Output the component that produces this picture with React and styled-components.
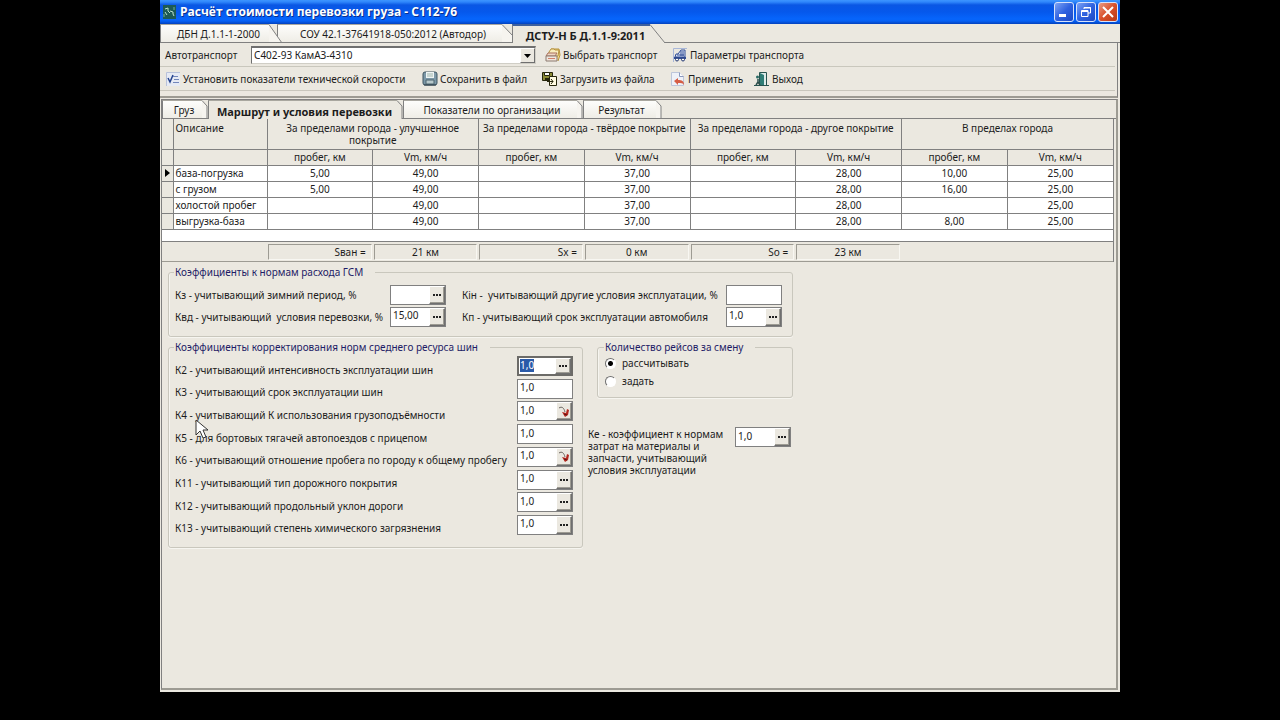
import React, { useState } from 'react'
import styled, { createGlobalStyle, css, ThemeProvider } from 'styled-components'

const theme = {
  face: '#ebe8e0',
  line: '#808080',
  soft: '#c9c7bd',
  shadow: '#9d9b93',
  ink: '#1c1c1c',
  caption: '#1e1c66',
  ui: "'Noto Sans', 'Open Sans', sans-serif",
  title: "'Open Sans', 'Noto Sans', sans-serif",
}

const GlobalStyle = createGlobalStyle`
  * {
    box-sizing: border-box;
  }
  body {
    margin: 0;
    background: #000;
  }
  button,
  input,
  select {
    font: inherit;
    color: inherit;
    margin: 0;
    border-radius: 0;
  }
`

const Desktop = styled.div`
  min-height: 100vh;
  padding: 0 12.5% 28px;
  display: flex;
  background: #000;
`

const Window = styled.main`
  flex: 1;
  min-width: 0;
  display: flex;
  flex-direction: column;
  background: ${({ theme }) => theme.face};
  color: ${({ theme }) => theme.ink};
  font-family: ${({ theme }) => theme.ui};
  font-size: 10px;
  line-height: 13px;
`

const TitleBar = styled.header`
  height: 24px;
  padding: 0 2px 0 3px;
  display: flex;
  align-items: center;
  gap: 4px;
  color: #fff;
  background: linear-gradient(#3d95ff 0, #2f86fb 2px, #0a57e4 5px, #0558ec 12px, #0665fc 19px, #0560f4 21px, #0341bd 24px);
`

const Title = styled.h1`
  flex: 1;
  margin: 0;
  font-family: ${({ theme }) => theme.title};
  font-size: 12px;
  font-weight: 700;
  line-height: 20px;
  text-shadow: 1px 1px #0a2f8c;
`

const CaptionButton = styled.button`
  width: 20px;
  height: 20px;
  margin-left: -2px;
  padding: 0;
  display: grid;
  place-items: center;
  border: 1px solid #d6e2fb;
  border-radius: 3px;
  background: ${({ $close }) =>
    $close
      ? 'linear-gradient(135deg, #e99b83, #d9502b 50%, #b93a16)'
      : 'linear-gradient(135deg, #7da2f4, #2f62e0 50%, #1c48c4)'};
`

const TabStrip = styled.nav`
  display: flex;
  height: ${({ $h }) => $h}px;
  border-bottom: 1px solid ${({ theme }) => theme.line};
`

const TabButton = styled.button`
  position: relative;
  z-index: ${({ $level }) => $level};
  width: ${({ $w }) => $w}px;
  margin-right: ${({ $overlap = 0 }) => -$overlap}px;
  margin-bottom: -1px;
  padding: 0;
  display: flex;
  border: 0;
  background: none;
  white-space: nowrap;
  font-size: ${({ $active }) => ($active ? 11 : 10)}px;
  font-weight: ${({ $active }) => ($active ? 700 : 400)};
`

const TabLabel = styled.span`
  flex: 1;
  align-self: stretch;
  display: flex;
  align-items: center;
  justify-content: center;
  padding-left: ${({ $cut }) => Math.floor($cut / 2)}px;
  padding-top: 2px;
  border-left: 1px solid ${({ theme }) => theme.line};
  border-top: ${({ $mark }) => ($mark ? '2px solid #3c5f9e' : '1px solid #a9a79f')};
  ${({ $active, theme }) =>
    $active
      ? css`
          background: ${theme.face};
        `
      : css`
          background: linear-gradient(#fdfdfb, #efede6);
          border-bottom: 1px solid ${theme.line};
        `}
`

const TabEdge = styled.svg`
  flex: none;
  display: block;
`

const Panel = styled.section`
  margin-right: 2px;
  padding: 0 2px 5px 0;
  border-right: 1px solid ${({ theme }) => theme.line};
  border-bottom: 2px solid ${({ theme }) => theme.shadow};
`

const Toolbar = styled.div`
  height: 24px;
  padding: 1px 5px 0;
  display: flex;
  align-items: center;
  border-bottom: 1px solid ${({ theme }) => theme.soft};
`

const ToolLabel = styled.label`
  width: 86px;
`

const SelectBox = styled.span`
  width: 285px;
  height: 18px;
  margin-right: 9px;
  display: flex;
  align-items: stretch;
  border: 1px solid ${({ theme }) => theme.line};
  border-top-width: 2px;
  border-color: #6f6f6f #d0cec6 #d0cec6 #6f6f6f;
  background: #fff;
`

const Select = styled.select`
  flex: 1;
  padding: 0 2px;
  border: 0;
  background: none;
  appearance: none;
`

const Drop = styled.span`
  width: 15px;
  display: grid;
  place-items: center;
  background: ${({ theme }) => theme.face};
  border: 1px solid;
  border-color: #fff #6f6f6f #6f6f6f #fff;
  pointer-events: none;
`

const ToolButton = styled.button`
  min-width: ${({ $w }) => $w}px;
  padding: 0;
  display: flex;
  align-items: center;
  gap: 2px;
  border: 0;
  background: none;
  white-space: nowrap;
`

const Page = styled.section`
  flex: 1;
  margin: 1px 2px 2px 1px;
  border: 1px solid ${({ theme }) => theme.line};
  border-width: 1px 2px 2px 1px;
  border-color: ${({ theme }) => `${theme.line} ${theme.shadow} ${theme.shadow} ${theme.line}`};
`

const GridArea = styled.div`
  margin-right: 2px;
  background: #fff;
  border-right: 1px solid ${({ theme }) => theme.line};
`

const Grid = styled.table`
  width: 100%;
  table-layout: fixed;
  border-collapse: collapse;
  text-align: center;
  th,
  td {
    padding: 0 2px;
    border: 1px solid ${({ theme }) => theme.line};
    border-top: 0;
    height: 16px;
    line-height: 12px;
    font-weight: 400;
  }
  th {
    background: ${({ theme }) => theme.face};
  }
  tr > :first-child {
    border-left: 0;
  }
  tr > :last-child {
    border-right: 0;
  }
`

const GroupHead = styled.tr`
  && th {
    height: 30px;
    padding-top: 3px;
    vertical-align: top;
  }
`

const RowName = styled.th`
  text-align: left;
  white-space: nowrap;
  && {
    background: ${({ $head, theme }) => ($head ? theme.face : '#fff')};
  }
`

const Totals = styled.div`
  margin-top: 11px;
  height: 21px;
  padding: 2px 0 1px 106px;
  display: grid;
  grid-template-columns: repeat(8, 1fr);
  border-top: 1px solid ${({ theme }) => theme.line};
  border-bottom: 1px solid ${({ theme }) => theme.shadow};
  background: ${({ theme }) => theme.face};
`

const Total = styled.output`
  margin-right: 2px;
  padding: 0 5px;
  line-height: 14px;
  text-align: ${({ $name }) => ($name ? 'right' : 'center')};
  border: 1px solid;
  border-color: ${({ theme }) => `${theme.shadow} #f8f7f2 #f8f7f2 ${theme.shadow}`};
`

const Form = styled.form`
  position: relative;
  padding: 4px 6px;
  display: grid;
  grid-template-columns: 415px 205px;
  column-gap: 5px;
  row-gap: 4px;
  justify-content: start;
  align-items: start;
`

const Group = styled.fieldset`
  min-width: 0;
  margin: 0;
  padding: ${({ $pad }) => $pad};
  border: 1px solid ${({ theme }) => theme.soft};
  border-radius: 3px;
  box-shadow: inset 1px 0 #f6f5f0, 0 1px #f6f5f0;
`

const Legend = styled.legend`
  margin-left: -1px;
  padding: 0 12px 0 1px;
  color: ${({ theme }) => theme.caption};
  white-space: nowrap;
`

const FuelGroup = styled(Group)`
  grid-column: 1 / -1;
`

const FuelFields = styled.div`
  display: grid;
  grid-template-columns: 215px 56px 280px 56px;
  row-gap: 2px;
  align-items: center;
  label:nth-of-type(even) {
    padding-left: 16px;
  }
`

const FuelLabel = styled.label`
  white-space: nowrap;
  padding-top: 2px;
`

const TireFields = styled.div`
  height: 180px;
  display: flex;
  flex-direction: column;
  justify-content: space-between;
`

const TireRow = styled.div`
  display: flex;
  justify-content: space-between;
  align-items: center;
  label {
    padding-top: 8px;
    white-space: nowrap;
  }
`

const FieldBox = styled.span`
  flex: none;
  width: 56px;
  height: 20px;
  display: flex;
  border: 1px solid ${({ theme }) => theme.line};
  background: #fff;
  ${({ $focused }) =>
    $focused &&
    css`
      border-width: 2px;
      border-color: #6c6b68;
    `}
`

const Input = styled.input`
  flex: 1;
  min-width: 0;
  padding: 0 0 2px ${({ $focused }) => ($focused ? 1 : 2)}px;
  border: 0;
  outline: 0;
  background: none;
  &::selection {
    color: #fff;
    background: #2a5aa8;
  }
`

const MoreButton = styled.button`
  width: 16px;
  padding: 0;
  display: grid;
  place-items: center;
  background: ${({ theme }) => theme.face};
  border: 1px solid;
  border-color: #fff #6f6f6f #6f6f6f #fff;
  box-shadow: inset -1px -1px ${({ theme }) => theme.shadow};
`

const Side = styled.div`
  min-width: 0;
`

const TripsGroup = styled(Group)`
  margin-left: 9px;
`

const Choice = styled.label`
  height: 18px;
  display: flex;
  align-items: center;
  gap: 6px;
`

const Radio = styled.input`
  appearance: none;
  width: 11px;
  height: 11px;
  border: 1px solid;
  border-color: #6f6f6f #fff #fff #6f6f6f;
  && {
    border-radius: 50%;
  }
  background: #fff;
  &:checked {
    background: radial-gradient(#000 2px, #fff 3px);
  }
`

const RepairRow = styled.div`
  margin-top: 29px;
  padding-right: 2px;
  display: flex;
  justify-content: space-between;
  line-height: 12px;
  label {
    width: 144px;
    padding-top: 1px;
  }
`

const Pointer = styled.svg`
  position: absolute;
  left: 33px;
  top: 157px;
`

const AppIcon = () => (
  <svg width="13" height="14" viewBox="0 0 13 14" aria-hidden="true">
    <rect width="13" height="14" fill="#1d5a55" />
    <path d="M2 4l3-1v3l2 2M2 7l2 3M7 6l3 1v2l1 2" fill="none" stroke="#b9e0cf" strokeWidth="1" />
    <path d="M1 12V9M11 2v3" stroke="#6fae98" />
  </svg>
)

const icons = {
  pick: (
    <>
      <path d="M6 2h8l1 6-2 6" fill="#f3dc8c" stroke="#b7923c" />
      <path d="M4 5l2-3h3l1 1h4l-1 6H3z" fill="#f8edbc" stroke="#b7923c" />
      <path d="M1 9l2-3h9l-2 3z" fill="#f0d7c4" stroke="#a8705c" />
      <path d="M1 9h11v5H1z" fill="#efe6dc" stroke="#8c7a70" />
      <path d="M3 11.500h7" stroke="#d0806a" />
    </>
  ),
  params: (
    <>
      <path d="M1.500 15V1.500H15" fill="none" stroke="#a9b7d8" />
      <path d="M3 10l1-3h2l3-4h4v7z" fill="#dfe6f6" stroke="#304c95" />
      <path d="M9 4v5M11 4v5M5 8h7" stroke="#304c95" />
      <path d="M2 10h12v2H2z" fill="#304c95" />
      <circle cx="5" cy="12.500" r="1.500" fill="#fff" stroke="#1f346f" />
      <circle cx="11" cy="12.500" r="1.500" fill="#fff" stroke="#1f346f" />
    </>
  ),
  speed: (
    <>
      <rect x="1" y="1" width="14" height="14" fill="#e6eaf4" />
      <path d="M1.500 15V1.500H15" fill="none" stroke="#b9c2da" />
      <path d="M3 7l2 4 3-7" fill="none" stroke="#24438f" strokeWidth="1.500" />
      <path d="M8 5.500h5M9 8.500h5M8 11.500h6" stroke="#7286bb" />
    </>
  ),
  save: (
    <>
      <rect x="1" y="1" width="14" height="13" rx="2" fill="#7c98a8" stroke="#3f5561" />
      <path d="M4 1h8v6H4z" fill="#eef4f4" />
      <path d="M5 3h6M5 5h6" stroke="#9fb5ad" />
      <path d="M4 9h8v4H4z" fill="#b8c9cc" stroke="#4c646f" />
      <path d="M2 14h12" stroke="#2c3d47" />
    </>
  ),
  load: (
    <>
      <path d="M.5 1.500h10v8H.5z" fill="#8b8b35" stroke="#25250c" />
      <path d="M2.500 1.500h5v3h-5z" fill="#fff" stroke="#25250c" />
      <path d="M3 7h4v3H3z" fill="#25250c" />
      <path d="M7.500 5.500h7v9h-7z" fill="#fffbe2" stroke="#25250c" />
      <path d="M5 10.500h6M9 8l2 2.500L9 13" fill="none" stroke="#25250c" />
    </>
  ),
  apply: (
    <>
      <path d="M1.500 1.500h8l4 4v9h-12z" fill="#eef1f8" stroke="#bcc5da" />
      <path d="M9.500 1.500v4h4" fill="#fff" stroke="#8a98bd" />
      <path d="M4 10l4-3v2c4 0 6 1 6 5-1-2-3-2-6-2v2z" fill="#d65d45" />
    </>
  ),
  exit: (
    <>
      <path d="M5.500 1.500h7v13h-7z" fill="#dcebea" stroke="#27534f" />
      <path d="M6 2l4 2v11l-4-1z" fill="#2f7d76" />
      <circle cx="3.500" cy="6" r="1.500" fill="#2a6b66" />
      <path d="M4 8v3l-2 3M4 11l2 3" fill="none" stroke="#2d4f4c" strokeWidth="1.500" />
      <path d="M0 14.500h15" stroke="#27534f" />
    </>
  ),
}

const Icon = ({ name }) => (
  <svg width="16" height="16" viewBox="0 0 16 16" aria-hidden="true">
    {icons[name]}
  </svg>
)

const Dots = () => (
  <svg width="8" height="2" viewBox="0 0 8 2" aria-hidden="true">
    <path d="M0 0h2v2H0zM3 0h2v2H3zM6 0h2v2H6z" fill="#222" />
  </svg>
)

const Recalc = () => (
  <svg width="12" height="13" viewBox="0 0 12 13" aria-hidden="true">
    <path d="M1 3c3-2 5 0 6 4" fill="none" stroke="#6b6560" />
    <path d="M4 7l4 1 1-4 2 1-1 5-3 2z" fill="#b3261e" />
    <path d="M6 9l3 1" stroke="#5a1512" />
  </svg>
)

const Tab = ({ label, width, height, cut, drop, active, mark, overlap, level }) => (
  <TabButton type="button" $w={width} $overlap={overlap} $level={level} $active={active}>
    <TabLabel $cut={cut} $active={active} $mark={mark}>
      {label}
    </TabLabel>
    <TabEdge width={cut} height={height} viewBox={`0 0 ${cut} ${height}`} aria-hidden="true">
      <path d={`M0 0L${cut - 1} ${drop}V${height}H0z`} fill={active ? theme.face : '#f6f4ef'} />
      <path d={`M0 .5L${cut - 1} ${drop}V${height}`} fill="none" stroke={theme.line} />
      {!active && <path d={`M0 ${height - 0.5}H${cut}`} stroke={theme.line} />}
    </TabEdge>
  </TabButton>
)

const Field = ({ id, value = '', button, focused }) => (
  <FieldBox $focused={focused}>
    <Input id={id} defaultValue={value} $focused={focused} autoFocus={focused} onFocus={e => e.target.select()} />
    {button && (
      <MoreButton type="button" aria-label="…">
        {button === 'calc' ? <Recalc /> : <Dots />}
      </MoreButton>
    )}
  </FieldBox>
)

const surfaces = [
  'За пределами города - улучшенное покрытие',
  'За пределами города - твёрдое покрытие',
  'За пределами города - другое покрытие',
  'В пределах города',
]

const routes = [
  { name: 'база-погрузка', cells: ['5,00', '49,00', '', '37,00', '', '28,00', '10,00', '25,00'] },
  { name: 'с грузом', cells: ['5,00', '49,00', '', '37,00', '', '28,00', '16,00', '25,00'] },
  { name: 'холостой пробег', cells: ['', '49,00', '', '37,00', '', '28,00', '', '25,00'] },
  { name: 'выгрузка-база', cells: ['', '49,00', '', '37,00', '', '28,00', '8,00', '25,00'] },
]

const totals = ['Sван =', '21 км', 'Sx =', '0 км', 'So =', '23 км']

const tires = [
  { id: 'k2', label: 'К2 - учитывающий интенсивность эксплуатации шин', button: 'more', focused: true },
  { id: 'k3', label: 'К3 - учитывающий срок эксплуатации шин' },
  { id: 'k4', label: 'К4 - учитывающий К использования грузоподъёмности', button: 'calc' },
  { id: 'k5', label: 'К5 - для бортовых тягачей автопоездов с прицепом' },
  { id: 'k6', label: 'К6 - учитывающий отношение пробега по городу к общему пробегу', button: 'calc' },
  { id: 'k11', label: 'К11 - учитывающий тип дорожного покрытия', button: 'more' },
  { id: 'k12', label: 'К12 - учитывающий продольный уклон дороги', button: 'more' },
  { id: 'k13', label: 'К13 - учитывающий степень химического загрязнения', button: 'more' },
]

const RouteGrid = () => (
  <GridArea>
    <Grid>
      <colgroup>
        <col style={{ width: 11 }} />
        <col style={{ width: 94 }} />
        <col span="8" />
      </colgroup>
      <thead>
        <GroupHead>
          <th />
          <RowName $head>Описание</RowName>
          {surfaces.map(s => (
            <th key={s} colSpan="2">
              {s}
            </th>
          ))}
        </GroupHead>
        <tr>
          <th />
          <th />
          {surfaces.map(s => (
            <React.Fragment key={s}>
              <th>пробег, км</th>
              <th>Vm, км/ч</th>
            </React.Fragment>
          ))}
        </tr>
      </thead>
      <tbody>
        {routes.map((row, i) => (
          <tr key={row.name}>
            <th>
              {i === 0 && (
                <svg width="5" height="8" viewBox="0 0 5 8" aria-hidden="true">
                  <path d="M0 0l5 4-5 4z" />
                </svg>
              )}
            </th>
            <RowName>{row.name}</RowName>
            {row.cells.map((cell, j) => (
              <td key={j}>{cell}</td>
            ))}
          </tr>
        ))}
      </tbody>
    </Grid>
    <Totals>
      {totals.map((t, i) => (
        <Total key={t} $name={i % 2 === 0}>
          {t}
        </Total>
      ))}
    </Totals>
  </GridArea>
)

const Coefficients = () => {
  const [mode, setMode] = useState('calc')
  return (
    <Form>
      <FuelGroup $pad="6px 6px 9px">
        <Legend>Коэффициенты к нормам расхода ГСМ</Legend>
        <FuelFields>
          <FuelLabel htmlFor="kz">Кз - учитывающий зимний период, %</FuelLabel>
          <Field id="kz" button="more" />
          <FuelLabel htmlFor="kin">Кін -&nbsp; учитывающий другие условия эксплуатации, %</FuelLabel>
          <Field id="kin" />
          <FuelLabel htmlFor="kvd">Квд - учитывающий&nbsp; условия перевозки, %</FuelLabel>
          <Field id="kvd" value="15,00" button="more" />
          <FuelLabel htmlFor="kp">Кп - учитывающий срок эксплуатации автомобиля</FuelLabel>
          <Field id="kp" value="1,0" button="more" />
        </FuelFields>
      </FuelGroup>
      <Group $pad="2px 9px 11px 6px">
        <Legend>Коэффициенты корректирования норм среднего ресурса шин</Legend>
        <TireFields>
          {tires.map(t => (
            <TireRow key={t.id}>
              <label htmlFor={t.id}>{t.label}</label>
              <Field id={t.id} value="1,0" button={t.button} focused={t.focused} />
            </TireRow>
          ))}
        </TireFields>
      </Group>
      <Side>
        <TripsGroup $pad="1px 6px 6px 7px">
          <Legend>Количество рейсов за смену</Legend>
          <Choice>
            <Radio type="radio" name="trips" checked={mode === 'calc'} onChange={() => setMode('calc')} />
            рассчитывать
          </Choice>
          <Choice>
            <Radio type="radio" name="trips" checked={mode === 'set'} onChange={() => setMode('set')} />
            задать
          </Choice>
        </TripsGroup>
        <RepairRow>
          <label htmlFor="ke">Ке - коэффициент к нормам затрат на материалы и запчасти, учитывающий условия эксплуатации</label>
          <Field id="ke" value="1,0" button="more" />
        </RepairRow>
      </Side>
      <Pointer width="13" height="20" viewBox="0 0 13 20" aria-hidden="true">
        <path d="M1 1v15l4-4 3 7 3-1-3-7h5z" fill="#fff" stroke="#333" />
      </Pointer>
    </Form>
  )
}

const App = () => (
  <ThemeProvider theme={theme}>
    <GlobalStyle />
    <Desktop>
      <Window>
        <TitleBar>
          <AppIcon />
          <Title>Расчёт стоимости перевозки груза - С112-76</Title>
          <CaptionButton aria-label="Свернуть">
            <svg width="12" height="12" viewBox="0 0 12 12">
              <path d="M1 8h7v3H1z" fill="#fff" />
            </svg>
          </CaptionButton>
          <CaptionButton aria-label="Восстановить">
            <svg width="12" height="12" viewBox="0 0 12 12" fill="none" stroke="#fff">
              <path d="M4 3V1.500h6.500V7H8M4 2h7M1.500 4.500H8v6H1.500zM1 5.500h7" />
            </svg>
          </CaptionButton>
          <CaptionButton $close aria-label="Закрыть">
            <svg width="12" height="12" viewBox="0 0 12 12" stroke="#fff" strokeWidth="2">
              <path d="M1 1l10 10M11 1L1 11" />
            </svg>
          </CaptionButton>
        </TitleBar>
        <TabStrip $h={19}>
          <Tab label="ДБН Д.1.1-1-2000" width={123} height={19} cut={14} drop={19} overlap={6} level={3} />
          <Tab label="СОУ 42.1-37641918-050:2012 (Автодор)" width={237} height={19} cut={12} drop={12} overlap={2} level={2} />
          <Tab label="ДСТУ-Н Б Д.1.1-9:2011" width={154} height={19} cut={16} drop={19} active mark level={4} />
        </TabStrip>
        <Panel>
          <Toolbar>
            <ToolLabel htmlFor="truck">Автотранспорт</ToolLabel>
            <SelectBox>
              <Select id="truck" defaultValue="С402-93 КамАЗ-4310">
                <option>С402-93 КамАЗ-4310</option>
              </Select>
              <Drop>
                <svg width="7" height="4" viewBox="0 0 7 4" aria-hidden="true">
                  <path d="M0 0h7L3.500 4z" />
                </svg>
              </Drop>
            </SelectBox>
            <ToolButton type="button" $w={127}>
              <Icon name="pick" />
              Выбрать транспорт
            </ToolButton>
            <ToolButton type="button">
              <Icon name="params" />
              Параметры транспорта
            </ToolButton>
          </Toolbar>
          <Toolbar>
            <ToolButton type="button" $w={257}>
              <Icon name="speed" />
              Установить показатели технической скорости
            </ToolButton>
            <ToolButton type="button" $w={120}>
              <Icon name="save" />
              Сохранить в файл
            </ToolButton>
            <ToolButton type="button" $w={128}>
              <Icon name="load" />
              Загрузить из файла
            </ToolButton>
            <ToolButton type="button" $w={84}>
              <Icon name="apply" />
              Применить
            </ToolButton>
            <ToolButton type="button">
              <Icon name="exit" />
              Выход
            </ToolButton>
          </Toolbar>
        </Panel>
        <Page>
          <TabStrip $h={19}>
            <Tab label="Груз" width={46} height={19} cut={6} drop={6} level={1} />
            <Tab label="Маршрут и условия перевозки" width={195} height={19} cut={6} drop={6} active level={1} />
            <Tab label="Показатели по организации" width={180} height={19} cut={6} drop={6} level={1} />
            <Tab label="Результат" width={79} height={19} cut={6} drop={6} level={1} />
          </TabStrip>
          <RouteGrid />
          <Coefficients />
        </Page>
      </Window>
    </Desktop>
  </ThemeProvider>
)

export default App
